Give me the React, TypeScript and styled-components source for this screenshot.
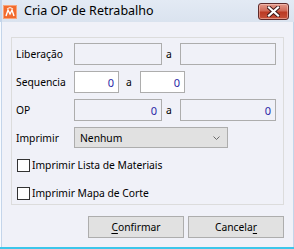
import React from "react";
import styled, { createGlobalStyle } from "styled-components";

const GlobalStyle = createGlobalStyle`
  html, body { margin: 0; padding: 0; background: #ffffff; }
  * { box-sizing: border-box; }
`;

const Window = styled.div`
  width: 294px;
  height: 249px;
  display: flex;
  flex-direction: column;
  background: #f0f1f8;
  border-bottom: 2px solid #3cc6ea;
  box-shadow: inset 1px 0 #f8fbff, inset 2px 0 #c4d5ea, inset -1px 0 #c4d5ea;
  font-family: "Noto Sans", "Open Sans", sans-serif;
  font-size: 10.3px;
  color: #000;
`;

const TitleBar = styled.div`
  height: 22px;
  display: flex;
  align-items: flex-start;
  padding-left: 3px;
  background: linear-gradient(#e3eaf4, #dae3ef);
  box-shadow: inset 2px 0 #c4d5ea;
`;

const AppIcon = styled.svg`
  width: 14px;
  height: 14px;
  margin-top: 5px;
  flex: none;
`;

const Title = styled.span`
  margin-left: 7px;
  margin-top: 2px;
  font-size: 12.5px;
  line-height: 18px;
  color: #000;
`;

const CloseButton = styled.div`
  margin-left: auto;
  margin-right: 5px;
  margin-top: 3px;
  width: 31px;
  height: 17px;
  border: 1px solid #5e2a2a;
  border-radius: 3px;
  background: linear-gradient(#e29a8c 0%, #d06a58 45%, #bb3a24 55%, #c6513a 100%);
  box-shadow: inset 0 0 0 1px rgba(255, 210, 200, 0.5);
  display: flex;
  align-items: center;
  justify-content: center;
`;

const Body = styled.div`
  flex: 1;
  display: flex;
  flex-direction: column;
  padding: 15px 0 0 11px;
`;

const Panel = styled.div`
  width: 273px;
  height: 168px;
  border: 1px solid #dcdcdc;
  padding: 5px 0 0 4px;
  display: flex;
  flex-direction: column;
  gap: 6px;
`;

const Row = styled.div<{ $h?: number }>`
  height: ${(p) => p.$h ?? 22}px;
  display: flex;
  align-items: center;
`;

const Label = styled.span`
  width: 58px;
  flex: none;
  white-space: nowrap;
`;

const TextBox = styled.div<{ $w: number; $disabled?: boolean }>`
  width: ${(p) => p.$w}px;
  height: 22px;
  flex: none;
  border: 1px solid #adadad;
  background: ${(p) => (p.$disabled ? "#f0f1f8" : "#ffffff")};
  color: #2a1fa6;
  display: flex;
  align-items: center;
  justify-content: flex-end;
  padding-right: 4px;
  font-size: 11px;
`;

const Sep = styled.span<{ $w: number; $pl: number }>`
  width: ${(p) => p.$w}px;
  padding-left: ${(p) => p.$pl}px;
  flex: none;
`;

const Select = styled.div`
  width: 154px;
  height: 21px;
  border: 1px solid #adadad;
  background: #e1e1e1;
  display: flex;
  align-items: center;
  padding: 0 5px 0 5px;
  justify-content: space-between;
`;

const Chevron = styled.svg`
  width: 7px;
  height: 4px;
  margin-right: 2px;
`;

const CheckRow = styled.label`
  height: 22px;
  display: flex;
  align-items: center;
  gap: 2px;
  padding-left: 1px;
`;

const Box = styled.span`
  width: 13px;
  height: 13px;
  border: 1px solid #333333;
  background: #ffffff;
  flex: none;
`;

const ButtonRow = styled.div`
  display: flex;
  justify-content: flex-end;
  gap: 4px;
  margin-top: 11px;
  padding-right: 10px;
`;

const Button = styled.div`
  width: 96px;
  height: 22px;
  border: 1px solid #adadad;
  background: #e1e1e1;
  display: flex;
  align-items: center;
  justify-content: center;
`;

const U = styled.span`
  text-decoration: underline;
  text-underline-offset: 2px;
`;

export default function App() {
  return (
    <>
      <GlobalStyle />
      <Window>
        <TitleBar>
          <AppIcon viewBox="0 0 14 14">
            <rect x="0" y="0" width="14" height="14" fill="#f26b2e" />
            <rect x="0.5" y="0.5" width="13" height="13" fill="none" stroke="#f9a57a" />
            <path d="M3 11 L5 5 L7 9 L9 5 L11 11" fill="none" stroke="#fff" strokeWidth="1.4" />
            <path d="M4 4 L7 2.5 L10 4" fill="none" stroke="#fde0cf" strokeWidth="1.2" />
          </AppIcon>
          <Title>Cria OP de Retrabalho</Title>
          <CloseButton>
            <svg width="13" height="11" viewBox="0 0 13 11">
              <path d="M2 1.5 L11 9.5 M11 1.5 L2 9.5" stroke="#3b1616" strokeWidth="4" strokeLinecap="square" />
              <path d="M2 1.5 L11 9.5 M11 1.5 L2 9.5" stroke="#ffffff" strokeWidth="2.2" strokeLinecap="square" />
            </svg>
          </CloseButton>
        </TitleBar>
        <Body>
          <Panel>
            <Row>
              <Label>Liberação</Label>
              <TextBox $w={88} $disabled />
              <Sep $w={18} $pl={4}>a</Sep>
              <TextBox $w={96} $disabled />
            </Row>
            <Row>
              <Label>Sequencia</Label>
              <TextBox $w={45}>0</TextBox>
              <Sep $w={21} $pl={7}>a</Sep>
              <TextBox $w={45}>0</TextBox>
            </Row>
            <Row>
              <Label>OP</Label>
              <TextBox $w={88} $disabled>0</TextBox>
              <Sep $w={18} $pl={4}>a</Sep>
              <TextBox $w={96} $disabled>0</TextBox>
            </Row>
            <Row $h={21}>
              <Label>Imprimir</Label>
              <Select>
                <span>Nenhum</span>
                <Chevron viewBox="0 0 7 4">
                  <path d="M0.5 0.5 L3.5 3.5 L6.5 0.5" fill="none" stroke="#6a6a6a" strokeWidth="1" />
                </Chevron>
              </Select>
            </Row>
            <CheckRow>
              <Box />
              <span>Imprimir Lista de Materiais</span>
            </CheckRow>
            <CheckRow>
              <Box />
              <span>Imprimir Mapa de Corte</span>
            </CheckRow>
          </Panel>
          <ButtonRow>
            <Button>
              <span><U>C</U>onfirmar</span>
            </Button>
            <Button>
              <span>Cancela<U>r</U></span>
            </Button>
          </ButtonRow>
        </Body>
      </Window>
    </>
  );
}
